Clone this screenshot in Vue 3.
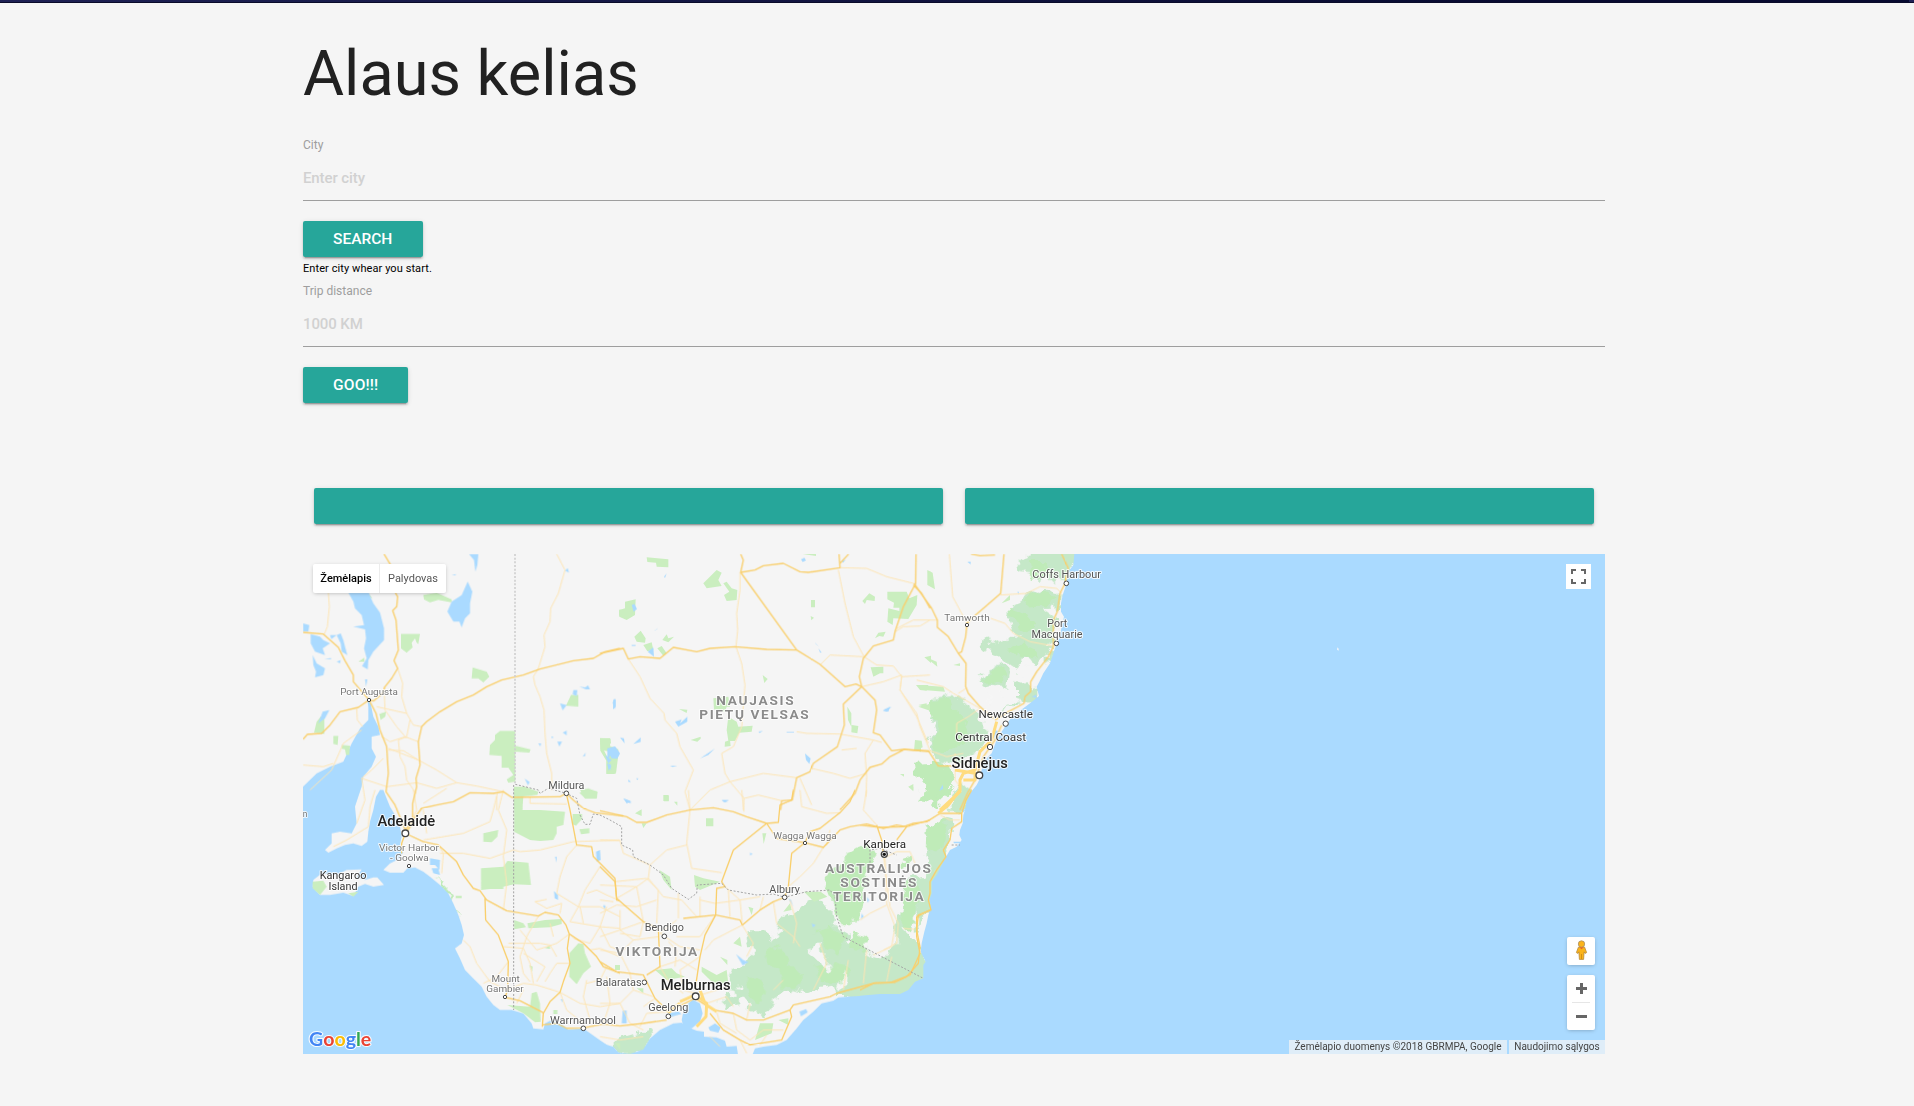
<script setup>
// Map geometry is split into six overlapping sheets; x / y is each sheet's origin.
const sheets = [
  {
    id: 'nw', x: 0, y: 0,
    parks: 'M400,165L440,158 485,178 485,187 445,180 420,187 402,178ZM333,282L390,282 385,312 380,308 375,295 365,308 368,322 350,338 333,325ZM548,382L590,395 598,410 580,427 565,415 545,415ZM92,530L103,530 103,582 72,578 80,545ZM268,522L288,515 286,530 272,540ZM130,588L145,588 143,615 130,612ZM155,615L180,617 178,645 168,645 165,628 155,626ZM630,573H676V725L655,728 650,718 670,705 655,683 635,683 635,648 598,645 600,615 615,600 615,585ZM676,617L722,628 718,638 676,635ZM672,740L705,740 745,755 742,765 700,770 697,810 672,810ZM870,750L895,745 922,755 920,775 885,775ZM843,465L865,465 865,500 828,497ZM930,595L962,597 960,618 985,628 985,645 978,700 950,700 950,660 960,635 932,630ZM987,210h8v18h-8ZM235,160L248,175 240,172ZM205,365l18,-12 0,12z',
    lakes: 'M175,158L236,158 250,190 270,218 282,265 282,300 250,335 235,360 233,388 216,378 230,355 222,325 228,295 225,268 190,260 222,255 215,225 195,205 190,185ZM533,125L547,155 540,190 540,220 525,235 515,262 508,245 490,245 472,215 485,185 515,165ZM537,42H565L562,75 556,95 552,60ZM39,250L58,255 55,275 39,275ZM62,282L90,290 100,300 120,310 98,325 105,345 75,335 62,310ZM140,285L152,280 160,300 165,320 172,345 155,335 152,310ZM68,345L80,370 105,385 100,405 75,412 78,395 70,375ZM225,418L232,418 228,440ZM98,515L118,510 105,535 85,550ZM825,92l8,-8 4,14zM810,490l20,5 -12,16zM850,450l12,0 -2,18 -12,-5zM868,440l18,2 8,-6 6,12 -12,0zM968,488l8,-12 0,32zM952,625L975,620 988,640 980,655 962,645 952,660ZM704,716l15,10 -5,10zM745,610l8,0 -2,10zM785,588l6,4 -6,3zM818,578l12,-6 0,14zM802,605l14,0 -8,15zM878,650l9,-12 -2,10zM952,672l10,0 0,20zM120,285l20,0 -16,12zM140,365l12,-5 -2,10zM103,356l20,-2 0,4zM485,106l12,-4 0,4z',
    major: 'M282,42L302,75M316,158L323,170 320,200 308,212 318,240 325,330 312,362 323,385 305,415 285,440 278,460 250,483 237,480M39,277L100,282 145,322 165,362 190,405 190,425 237,480M39,598L52,583 95,580 120,555 150,515 205,502 237,480M237,480L258,520 270,570 290,620 295,700 288,755 315,795 346,870M990,325L945,335 910,355 850,362 750,387 700,405 635,420 590,440 550,465 500,485 450,515 410,545 395,560 385,605 390,675 378,715 380,740 368,790 368,850 346,880M346,870L395,805 440,795 490,785 540,758 610,760 640,755 665,772 810,770 829,760 850,780 880,805 915,818 1000,828',
    minor: 'M800,42L825,90 805,160 782,205 780,245 762,285 765,320 745,385 730,410 735,435 750,470 762,510 765,580 770,640 785,700 785,750M115,158L118,200 112,260 103,282M323,385L338,430 335,470 350,520 370,555 395,560M260,500L350,520M282,440L285,510 320,560 350,595M275,590L300,605 345,590 385,605M295,625L385,660 440,690 500,728 560,738 640,755M39,675L100,680 130,670M215,715L290,740 380,728 440,745 500,728M215,715L245,690 280,655M200,505L202,540 218,560M60,750L125,690 160,610 215,570M360,540L350,590 325,600 330,650 345,680 350,720 378,760M295,630L340,632 385,660M400,790L470,745M620,770L620,810'
  },
  {
    id: 'n', x: 930, y: 0,
    parks: 'M140,52L205,58 205,82 170,80 168,68 142,66ZM310,130L350,90 365,98 355,120 365,138 320,145ZM370,130L380,125 395,145 412,150 410,180 380,183 372,165 388,155ZM75,185L107,178 105,225 80,240 58,230 58,210 75,205ZM103,290L122,272 137,295 135,308 110,305ZM130,315l25,-8 5,22 -18,5zM172,325L185,318 200,340 190,347ZM187,300L200,283 205,295 222,290 205,307ZM608,42H648V48ZM633,180h12v22h-12zM632,228l10,5 -8,8zM787,183L808,160 825,170 824,183 800,180 795,192ZM862,155L920,155 928,175 952,165 950,195 925,237 880,235 878,255 862,245 865,205 898,213 898,203 880,203 882,188 862,178ZM825,295L835,278 857,275 850,290 838,288ZM812,382L850,380 850,400 840,400 820,410ZM488,405l15,12 -10,12zM340,475L385,470 390,500 380,500 375,515 342,508ZM385,530L410,545 415,560 458,557 455,575 418,578 405,603 385,602 380,570ZM375,605l15,-5 2,18 -18,2zM237,507l25,2 -2,10zM272,600l30,-10 0,6 -10,9zM742,500l12,20 0,40 -10,-20zM755,555l20,3 -3,22 -18,-3zM973,352l20,-5 0,22zM948,435L985,435 980,452 960,450ZM945,600l20,2 3,20 -26,10zM0,595h30l3,14 -22,20 20,40 18,5 -5,28 -25,0 0,-40 -18,-30zM192,768h14v16h-14zM222,785l10,0 0,12zM983,95h10v45zM900,702l12,0 0,8zM925,740l15,-8 0,18zM955,500l35,-8 0,20z',
    lakes: 'M22,628L45,620 60,640 52,655 35,655ZM15,645l20,15 -10,10zM22,670l12,8 -8,14zM225,545L245,538 240,550 262,530 262,545 235,560ZM100,612l22,-20 0,14zM60,592l12,3 2,15zM300,655L345,625 325,645ZM615,640L632,655 628,672 618,660ZM143,335L160,322 162,350ZM603,58l10,-5 5,8 -10,5zM95,195l8,-3 8,15 -10,8zM40,478l7,0 0,22 -8,8zM655,325l10,12 -5,0zM645,308l12,12 -10,-8zM70,775L92,785 80,790ZM850,510L870,500 865,515ZM365,780l22,0 -12,6zM418,632l10,15zM475,575l14,-2 -10,6zM560,576h22v2h-22zM210,677l22,0 -14,4zM162,272l14,-8 -8,6zM192,110l8,-10 -5,14zM595,118l0,14zM85,718l8,8 -8,0zM108,715l8,0 -4,5zM95,315h12v3h-12zM725,62l12,-2 -8,8z',
    major: 'M0,340L70,325 85,357 120,350 180,355 220,322 290,335 330,325 405,320 500,328 590,330 660,373 735,440 768,432 785,440M422,42L430,60 422,97 590,330M422,97L465,90 490,77 550,70 600,95 625,97 720,83 717,42M720,70L746,42M948,42L947,130 910,200 885,275 880,300 820,318 790,355 778,410 785,440 825,480 830,510 820,578 840,585 875,632 910,628 990,635M940,135L965,160 990,205M785,440L730,492 733,555 712,620 640,670 630,695 590,713 577,780 545,782 542,810M910,630L870,650 845,672 810,682 780,720 765,760 720,810',
    minor: 'M85,357L120,410 150,475 192,520 195,540 230,580 240,620 280,690 255,755 270,810M420,97L420,150 410,220 413,270 408,320 425,370 435,435 425,560 400,620 365,640 375,700 390,725 432,775 430,810M270,810L330,750 390,725 490,700 590,713M432,775L475,765 545,782M720,83L800,85 860,110 940,130M715,90L735,190 760,290 792,350 830,375 880,378 905,410 990,405M785,440L850,425 905,405 900,450 950,530 985,610M885,275L910,260 960,258 990,240M590,575L620,580 720,582 820,600 845,607M820,600L795,640 800,710 798,770M635,685L700,700 750,715 800,700M600,715L635,795M662,373L690,345 790,350M725,630L770,625'
  },
  {
    id: 'ne', x: 1770, y: 0,
    sea: 'M583,42L580,75 565,95 560,130 548,165 543,190 543,215 552,230 545,260 540,285 530,310 520,340 510,370 490,400 478,425 470,440 477,468 450,490 430,505 400,525 385,545 365,575 350,600 335,640 315,660 305,690 300,715 290,735 270,760 258,790 257,830H2300V42Z',
    forest: 'M412,75L440,48 470,32H593L590,75 572,100 558,120 500,120 480,125 450,100 415,95ZM440,165L500,142 545,160 540,225 528,235 525,200 500,205 475,205 525,245 522,300 500,310 430,290 400,280 385,245 400,190ZM288,320L310,300 340,315 385,285 430,290 515,315 505,345 470,385 445,350 430,350 410,388 380,370 360,350 330,330 300,345ZM295,420L325,385 370,375 390,395 385,440 345,430 310,440ZM405,418L430,425 475,445 475,475 440,490 405,475ZM155,470L210,465 275,500 285,520 320,545 305,565 325,580 310,620 290,640 250,650 215,680 175,670 160,640 150,600 160,580 150,550 160,530 150,500ZM195,810L240,740 275,735 285,745 260,775 255,810ZM360,515L400,495 430,490 400,505ZM520,330l-5,25 -12,20 0,-20z',
    bright: 'M440,60L490,60 520,110 480,120 450,105ZM430,180L490,150 530,175 500,195 440,200ZM300,425L325,390 365,385 370,420 330,425ZM390,210L420,215 470,250 460,280 410,260ZM155,475L205,470 215,500 260,530 240,560 260,590 240,620 200,640 165,630 155,600 170,560 150,520ZM105,668L170,665 215,690 222,705 200,740 225,750 170,800 150,785 115,780 120,760 145,745 110,705ZM380,330L430,310 470,330 480,360 430,340Z',
    parks: 'M142,90L158,98 165,148 142,135ZM110,435L190,440 195,455 130,450ZM135,350l35,15 2,15zM105,600l18,15 0,20 -18,-5zM115,495l25,-5 0,12zM220,375l20,-5 0,8zM85,740l15,0 0,14zM365,190l25,-25 0,15z',
    clear: 'M318,440L400,480 395,500 335,520ZM440,380L480,395 450,440 420,420Z',
    lakes: 'M262,65h10v8zM325,265l8,15zM150,282l10,8zM8,512L35,500 20,515ZM288,125l12,25zM412,155h4v8zM178,752l10,-18 2,12zM340,565l15,10 -10,25zM455,470l14,-6 0,10z',
    major: 'M102,130L130,170 155,205 172,240 172,262 205,290 235,340 258,370 257,440 265,460 300,500 340,535M372,42L362,160 310,205 275,235 261,250 257,290 245,335 235,340M545,42L565,85 555,130 540,160 532,215 520,240 520,320 505,350 470,395 452,425 452,455 435,470 432,490 385,515 345,540M70,628L145,632 175,678 225,678M273,42L300,47 345,45M365,555L345,600 310,650 285,720 262,760 240,810',
    minor: 'M208,42L218,170 261,250M332,235L375,250 400,280 450,305 520,318M172,240L100,240 50,265M362,165L440,160 480,140 530,145 545,160M65,410L60,450 110,520 120,560 150,632M110,420L190,440 220,460 300,505M230,580L230,550 265,530 300,505M235,460L258,445M225,640L225,720 240,740M150,632L200,650 250,640',
    freeway: 'M350,545L335,600 300,635 285,690 250,700 240,720 240,755 180,810M225,690L285,700 285,720 250,720'
  },
  {
    id: 'sw', x: 0, y: 750,
    sea: 'M39,-10L80,-50 120,-70 160,-85 185,-140 210,-185 235,-210 235,-250 232,-270 242,-260 250,-220 265,-190 270,-165 245,-160 245,-125 258,-100 245,-70 220,-40 215,-10 205,20 195,50 200,100 185,130 150,125 125,130 125,160 105,180 115,188 140,175 165,165 190,160 215,168 232,155 235,125 240,95 250,60 258,20 270,0 280,0 290,25 300,50 315,75 330,110 335,140 330,165 340,185 330,205 300,220 280,240 300,248 340,248 352,235 375,232 400,245 420,260 450,285 475,310 490,340 505,375 515,405 522,435 515,460 495,475 510,505 525,540 550,565 575,590 590,620 610,645 630,660 665,660 700,670 725,700 730,715 760,718 765,700 785,690 810,700 835,718 880,715 915,740 950,765 990,790V900H30Z',
    land: 'M70,270L95,250 140,255 170,240 215,238 200,262 225,270 250,262 262,262 282,285 250,290 225,282 205,290 190,318 160,308 120,315 90,315 68,290Z',
    parks: 'M672,0H690L697,60H750L825,65 820,105 800,110 800,130 790,150 750,153 720,150 672,125ZM848,72h28l0,15 -18,20 -12,-5zM868,8L895,0 922,5 920,25 885,25ZM868,118l30,-3 0,15 -25,3zM580,130L625,120 622,140 605,157 580,155ZM573,235L640,230 652,213 715,218 723,285 672,283 640,290 640,297 600,297 573,300ZM672,390L700,400 708,412 672,418ZM712,400L765,390 815,387 815,402 780,412 715,415ZM838,490L865,460 880,462 885,490 903,530 880,550 860,583 838,560ZM497,317h18v8h-18zM765,475l15,-10 0,12zM652,645L720,650 725,610 740,605 750,640 752,695 735,697 700,670ZM68,275L100,272 110,290 90,315 68,295ZM175,310l30,-5 -15,15zM718,525l10,5 -2,15zM790,660h12v12h-12zM975,760h15v20z',
    bright: 'M425,255L470,300 500,350 510,395 500,370 480,330Z',
    lakes: 'M420,205L450,210 448,240 435,225 420,225ZM425,235h20l5,20 -20,-5zM918,185l12,-5 2,30 -12,5zM792,303l12,12 0,15 -10,-5zM795,200h5v18zM805,260l5,14zM940,348h5v12zM812,628h6v10zM440,130l10,15zM560,0l20,4z',
    major: 'M346,130L400,155 445,165 500,215 520,255 550,295 570,302 590,330 650,362 745,378 765,367 805,375 828,405 838,432 880,460 920,500 940,530 990,550M585,325L587,390 625,435 655,515 653,600 645,622M645,622L690,632 760,668 757,710M838,432L832,475 840,520 820,575 810,607 780,635 760,670M829,10L840,60 860,165 905,170 910,200 925,215 975,265 980,330 990,333M757,705L800,700 830,715 880,714 940,702 990,708M346,130L335,160 335,190',
    minor: 'M450,190L520,190 600,205 670,180 690,185 750,180 850,155 990,150M400,150L520,130 600,95 610,60 622,10M640,0L625,60 650,120 640,200 650,280 640,360M520,450L540,470 560,520 600,575 650,600 700,580 740,585 810,607M640,470L700,475 720,520 730,580M740,575L765,530 700,490M690,420L740,480 800,460 838,432M745,378L710,440 690,500 700,550 720,575M810,370L815,340 770,355 735,335 770,328M860,165L830,200 810,260 800,310 865,350 930,350 990,380M865,350L840,395 930,410 990,415M890,310L920,300 950,315 985,330M865,350L885,300 930,230M930,410L900,460 850,445M930,410L960,470 990,480M930,410L950,350M720,20V40L830,42M810,607L870,640 930,650 990,640M810,607L830,660 880,700M890,570L880,620 900,690M840,520L800,520 780,550 765,575M200,100L225,30 215,-35M255,0L240,50 235,110 170,150 130,170M370,0L380,60 350,120M400,60L410,130M445,165L460,190 455,250M655,515L620,560 580,580M655,460L750,460 780,465 800,500M680,640L700,600M950,530L930,570 890,580M900,480L930,475 990,500M780,400L790,440M870,350L880,400'
  },
  {
    id: 's', x: 930, y: 750,
    sea: 'M0,755L20,765 40,770 55,788 90,792 130,778 150,745 180,720 220,700 245,698 255,708 290,722 312,725 312,740 350,742 375,752 380,770 410,768 415,800 455,800 465,775 490,770 530,765 560,750 590,715 610,690 640,665 665,640 700,632 715,622 780,617V900H0ZM245,690L250,665 265,640 278,628 300,640 308,670 300,695 275,715 250,708ZM205,670L235,664 245,672 215,680ZM325,712L345,700 362,712 355,728 330,722Z',
    forest: 'M390,570L400,530 430,525 465,495 445,430 480,430 510,450 555,375 600,360 625,330 690,345 700,390 730,440 800,480 870,510 960,500 985,500 980,565 950,600 910,620 820,622 780,627 740,615 710,615 700,590 650,600 600,610 560,605 530,600 515,660 490,672 450,655 430,630 400,620ZM365,622L400,608 415,645 370,655ZM50,745L120,725 175,710 135,775 90,798 50,785Z',
    bright: 'M675,290L690,240 740,200 770,180 810,160 830,190 800,230 790,330 770,380 760,400 720,400 705,370 705,330ZM490,480L540,460 570,520 600,560 590,590 550,590 540,540 500,520ZM650,420L700,410 730,450 720,500 690,480ZM760,430L800,420 815,450 790,490 750,470ZM440,560L480,560 500,600 490,650 460,640ZM960,0L990,15 975,20ZM640,540L700,520 760,540 720,580 660,575Z',
    clear: 'M790,330L830,210 870,200 890,210 905,270 895,360 890,400 890,470 840,508 790,480 800,440 765,420 780,380ZM618,490L640,482 650,455 665,455 672,500 690,535 670,530 645,505ZM708,600L725,565 738,545 735,580 722,600ZM570,600l30,5 -25,8zM500,432L535,425 520,450ZM400,585l30,-10 -5,12z',
    parks: 'M165,540L215,535 230,550 255,560 200,570ZM305,530L350,555 380,540 385,580 340,580 305,545ZM465,750L480,700 520,700 515,730ZM178,240L210,260 215,300 190,270ZM282,255L310,265 360,275 300,300 285,290ZM318,85h22v24h-22zM400,460l20,-20 5,30zM445,350l15,5 -5,20zM535,690l30,-5 0,20zM110,595l20,0 0,15zM190,15h16v18h-16zM45,525h15v15h-15zM487,130l12,0 -8,32zM125,100l15,0 -10,14zM105,70l20,-12 0,20zM360,500l22,10 0,15zM612,305l50,0 20,15 -40,15zM550,365l20,-25 5,20z',
    lakes: 'M408,492l22,18 16,6 -18,10zM68,662h12v38h-15zM598,665l20,-8 5,10 -20,12zM565,325l8,5 6,20zM635,400l12,5 -8,8zM785,370l6,10 -8,8zM70,25l22,8 0,8zM185,160l15,-8zM450,188l8,4 -8,4zM220,155l12,-8zM365,30l20,4 -12,3zM285,35l8,6zM10,345h5v14zM205,190l5,12zM800,320l8,10 -6,8z',
    major: 'M0,62L80,80 110,97 140,97 200,75 270,60 340,53 400,65 440,80 500,100 535,97 540,45 575,30 580,0M765,0L750,35 720,68 660,115 630,125 615,158M500,100L530,145 615,158 670,172 720,120 750,110 800,102 850,115 890,105 920,110 990,90M830,105L845,150 850,190M920,110L890,150M500,100L400,180 365,275 375,290 350,295 347,375 315,435 300,500 285,600M250,385L347,375 420,390 427,405M615,158L575,190 565,290 554,322 520,335 480,360 427,405M0,230L45,275 50,325 130,395 175,415 180,530 140,555M0,515L50,545 130,555 140,575 165,625 205,665M60,708L130,700 200,690M205,665L285,625 340,660 400,670 440,690 490,690 570,660 580,645 690,620 710,610 820,580 870,578 930,555 960,490 950,440 950,380 990,360M330,670L370,720 420,750 450,765 545,750 575,680 570,660',
    minor: 'M265,0L270,60 260,160 275,235 365,248M425,0L432,65M0,150L60,152 70,190 150,225 145,265 110,290 0,285M150,225L200,180 260,165M145,265L190,320 245,330 290,380M45,275L140,265 175,300 170,400M50,325L110,290 130,395M0,370L50,345 110,350 170,330M180,430L230,390M180,430L240,470 300,480M427,405L340,450 315,480M427,405L420,330 375,290M300,330L345,340 420,330 480,320M235,310L235,385M300,320L300,380M385,300L390,380M347,375L300,440 230,440M427,405L460,460 440,500M480,360L490,320M520,335L530,400 580,440 600,470M570,330L590,400 580,460M670,172L640,220 600,260 565,290M600,0L605,50 680,70 720,68M800,0L790,60 830,105M680,165L690,120M850,190L860,270 870,350 895,400 890,460 850,480M0,440L60,420 130,395M0,480L60,490 100,450 175,440M60,490L90,550M180,530L240,510 290,540M180,530L210,580 250,610M90,550L100,600 60,640 0,640M100,600L160,620M60,640L90,700 130,720M20,560L30,640 10,700M130,650L165,625M240,540L250,600 285,610M285,620L350,600 390,590M320,640L380,620 400,650M400,670L410,720 450,750 490,720 550,720M440,690L450,640M350,665L360,700 410,730M330,740L360,770M420,750L440,790M480,765L500,735M240,540L300,500M190,600L240,590M205,665L140,670 120,710M0,740L60,750 130,740M520,600L550,570M640,600L680,520 660,460M730,600L745,510M800,480L790,580M205,455L230,480 225,530M60,360L60,420 100,450M0,330L40,335M130,395L120,440 60,430',
    freeway: 'M240,635L285,615 320,640 318,680 290,710M320,645L350,665M300,600L315,640M205,668L240,640'
  },
  {
    id: 'se', x: 1710, y: 750,
    sea: 'M340,0L325,25 318,50 310,75 308,100 300,120 298,135 305,150 290,170 270,180 258,200 245,225 230,255 215,275 215,310 208,330 213,350 205,375 200,400 193,425 185,460 182,485 197,515 190,525 190,565 165,575 145,600 120,612 60,612 0,617V900H2300V0Z',
    forest: 'M200,110L255,80 275,85 280,150 265,190 250,230 225,270 215,330 210,370 190,380 178,420 150,400 130,415 150,440 180,470 205,510 200,565 175,585 140,610 0,622V470L60,500 100,470 105,400 125,370 130,290 150,270 190,260 205,200 195,150ZM265,50L300,20 330,0 328,50 295,65Z',
    bright: 'M200,110L250,82 265,120 250,170 215,190 195,170ZM180,15L200,0 270,0 260,25 230,20 225,40ZM130,290L150,275 180,290 165,350 155,410 130,415 125,370ZM127,210l25,-10 0,20 -20,15zM0,420L30,430 20,470 0,480Z',
    clear: 'M155,380L172,365 170,450 125,415 160,415Z',
    lakes: 'M280,155h20v5h-18zM305,58l10,0 -4,10z',
    major: 'M0,105L60,112 130,110 160,100 200,95 240,70 305,70 305,95 275,115 270,150 250,180 258,200 230,240 210,275 210,310 205,330 213,360 175,375 170,420 180,470 175,520 140,560 105,577 45,578 0,600M335,0L318,30 305,70',
    minor: 'M80,200L110,185 150,185 165,220M75,200L80,340 105,410 95,470 40,495M0,390L30,370 80,345M95,500L80,575M130,415L165,418M240,75L270,90 300,90',
    freeway: 'M300,0L265,45 235,70'
  }
]

const layers = ['forest', 'bright', 'clear', 'sea', 'land', 'parks', 'lakes', 'minor', 'major', 'freeway']
const ragged = ['forest', 'bright', 'clear']

const borders = [
  'M671,735V1410',
  'M676,733L745,750 750,760 775,745 829,760 860,775 865,800 870,825 885,853 900,853 910,822 930,825 960,840 995,860 995,915 1028,930 1030,950 1080,975 1120,1005 1145,1045 1195,1078 1220,1060 1222,1035 1295,1030 1315,1050 1400,1065 1450,1062 1484,1072 1550,1055 1620,1050 1635,1070 1640,1130 1660,1190 1900,1315',
  'M1740,990V930L1770,925 1820,945M1985,915h25'
]

const labels = [
  { t: 'Port Augusta', x: 237, y: 466, w: 173, s: 29, c: '#757575' },
  { t: 'Mildura', x: 829, y: 747, w: 108, s: 31, c: '#555' },
  { t: 'NAUJASIS', x: 1395, y: 495, w: 232, s: 41, c: '#8b8b8b', b: 700 },
  { t: 'PIETŲ VELSAS', x: 1392, y: 537, w: 328, s: 41, c: '#8b8b8b', b: 700 },
  { t: 'Coffs Harbour', x: 2330, y: 113, w: 206, s: 32, c: '#555' },
  { t: 'Tamworth', x: 2031, y: 242, w: 136, s: 29, c: '#757575' },
  { t: 'Port', x: 2302, y: 260, w: 60, s: 32, c: '#555' },
  { t: 'Macquarie', x: 2301, y: 293, w: 153, s: 32, c: '#555' },
  { t: 'Newcastle', x: 2147, y: 534, w: 163, s: 35, c: '#333' },
  { t: 'Central Coast', x: 2102, y: 603, w: 213, s: 35, c: '#333' },
  { t: 'Sidnėjus', x: 2069, y: 685, w: 169, s: 43, c: '#222', b: 500 },
  { t: 'n', x: 45, y: 832, w: 14, s: 29, c: '#757575' },
  { t: 'Adelaidė', x: 349, y: 859, w: 173, s: 43, c: '#222', b: 500 },
  { t: 'Victor Harbor', x: 357, y: 934, w: 180, s: 29, c: '#757575' },
  { t: '- Goolwa', x: 358, y: 964, w: 116, s: 29, c: '#757575' },
  { t: 'Kangaroo', x: 159, y: 1016, w: 140, s: 32, c: '#333' },
  { t: 'Island', x: 159, y: 1049, w: 87, s: 32, c: '#333' },
  { t: 'Mount', x: 647, y: 1327, w: 85, s: 29, c: '#757575' },
  { t: 'Gambier', x: 645, y: 1357, w: 112, s: 29, c: '#757575' },
  { t: 'Warrnambool', x: 879, y: 1451, w: 198, s: 31, c: '#555' },
  { t: 'Balaratas', x: 986, y: 1337, w: 138, s: 31, c: '#555' },
  { t: 'VIKTORIJA', x: 1099, y: 1249, w: 245, s: 41, c: '#8b8b8b', b: 700 },
  { t: 'Bendigo', x: 1123, y: 1172, w: 118, s: 31, c: '#555' },
  { t: 'Melburnas', x: 1217, y: 1350, w: 210, s: 43, c: '#222', b: 500 },
  { t: 'Geelong', x: 1135, y: 1412, w: 120, s: 31, c: '#555' },
  { t: 'Wagga Wagga', x: 1545, y: 896, w: 190, s: 29, c: '#757575' },
  { t: 'Albury', x: 1484, y: 1058, w: 92, s: 31, c: '#555' },
  { t: 'Kanbera', x: 1784, y: 923, w: 128, s: 34, c: '#222' },
  { t: 'AUSTRALIJOS', x: 1764, y: 999, w: 318, s: 41, c: '#8b8b8b', b: 700 },
  { t: 'SOSTINĖS', x: 1765, y: 1041, w: 228, s: 41, c: '#8b8b8b', b: 700 },
  { t: 'TERITORIJA', x: 1765, y: 1083, w: 272, s: 41, c: '#8b8b8b', b: 700 }
]

const towns = [
  [237, 480, 5], [829, 760, 7], [2329, 130, 7], [2031, 255, 5], [2299, 310, 7],
  [2147, 551, 8], [2100, 621, 8], [2068, 706, 10], [346, 880, 10], [357, 978, 5],
  [645, 1371, 5], [880, 1465, 7], [1063, 1327, 7], [1123, 1189, 7], [1217, 1369, 10],
  [1135, 1429, 7], [1545, 909, 5], [1484, 1072, 7], [1783, 943, 9]
]
</script>

<template>
  <div class="top-bar"></div>
  <main class="container">
    <h1>Alaus kelias</h1>

    <form class="field" @submit.prevent>
      <label for="city">City</label>
      <input id="city" type="text" placeholder="Enter city" />
      <button class="btn search">Search</button>
    </form>
    <p class="hint">Enter city whear you start.</p>

    <form class="field" @submit.prevent>
      <label for="distance">Trip distance</label>
      <input id="distance" type="text" placeholder="1000 KM" />
      <button class="btn goo">Goo!!!</button>
    </form>

    <div class="row">
      <div class="btn wide"></div>
      <div class="btn wide"></div>
    </div>

    <section class="map">
      <svg class="canvas" viewBox="39 42 3906 1500" preserveAspectRatio="none">
        <defs>
          <filter id="ragged" filterUnits="userSpaceOnUse" x="0" y="0" width="3000" height="1600">
            <feTurbulence type="fractalNoise" baseFrequency="0.025" numOctaves="3" seed="4" />
            <feDisplacementMap in="SourceGraphic" scale="50" xChannelSelector="R" yChannelSelector="G" />
          </filter>
        </defs>
        <g v-for="layer in layers" :key="layer" :class="layer" :filter="ragged.includes(layer) ? 'url(#ragged)' : undefined">
          <template v-for="s in sheets" :key="s.id">
            <path v-if="s[layer]" :d="s[layer]" :transform="`translate(${s.x} ${s.y})`" />
          </template>
        </g>
        <path class="state" d="M675,42V735" />
        <path v-for="b in borders" :key="b" class="border" :d="b" />
        <path d="M3142,322l4,4 0,6 -5,-3z" fill="#f0f4f8" />
        <circle v-for="p in towns" :key="p.join()" class="town" :cx="p[0]" :cy="p[1]" :r="p[2]" :stroke-width="p[2] > 8 ? 4 : 3" />
        <circle cx="1783" cy="943" r="5" fill="#111" />
        <text
          v-for="l in labels" :key="l.t" class="label" :x="l.x" :y="l.y" :fill="l.c"
          :font-size="l.s" :font-weight="l.b || 400" :textLength="l.w"
          :lengthAdjust="l.s === 41 ? 'spacing' : 'spacingAndGlyphs'"
        >{{ l.t }}</text>
        <text class="logo" x="57" y="1518" textLength="187" lengthAdjust="spacingAndGlyphs"><tspan fill="#4285f4">G</tspan><tspan fill="#ea4335">o</tspan><tspan fill="#fbbc05">o</tspan><tspan fill="#4285f4">g</tspan><tspan fill="#34a853">l</tspan><tspan fill="#ea4335">e</tspan></text>
      </svg>

      <div class="types">
        <span class="active">Žemėlapis</span><span>Palydovas</span>
      </div>
      <div class="fullscreen">
        <svg width="15" height="15" viewBox="0 0 15 15"><path d="M0,0H5V2H2V5H0ZM10,0H15V5H13V2H10ZM0,10H2V13H5V15H0ZM13,10H15V15H10V13H13Z" fill="#666" /></svg>
      </div>
      <div class="tools">
        <div class="pegman">
          <svg width="13" height="21" viewBox="0 0 13 21">
            <path d="M3.4,7.2h6.2l2,5.4-1.6,.8-.9-1.6-.5,7.6H4.4L3.9,11.8 3,13.4 1.4,12.6Z" fill="#fbb41a" stroke="#b88a3c" stroke-width=".8" />
            <circle cx="6.5" cy="4" r="3.2" fill="#fbb41a" stroke="#a9916a" stroke-width=".8" />
            <path d="M4.2,7.3h4.6L6.5,9.3Z" fill="#e5672b" />
            <path d="M6.5,14v5" stroke="#c98712" stroke-width=".8" />
          </svg>
        </div>
        <div class="zoom">
          <span><svg width="11" height="11"><path d="M4,0h3v4h4v3H7v4H4V7H0V4h4z" fill="#666" /></svg></span>
          <i></i>
          <span><svg width="11" height="3"><path d="M0,0h11v3H0z" fill="#666" /></svg></span>
        </div>
      </div>
      <div class="credits">
        <span class="data">Žemėlapio duomenys ©2018 GBRMPA, Google</span>
        <span class="terms">Naudojimo sąlygos</span>
      </div>
    </section>
  </main>
</template>

<style>
body { background: #f5f5f5; }
</style>

<style scoped>
* { box-sizing: border-box; }
.top-bar {
  height: 3px;
  background: linear-gradient(90deg, transparent calc(100% - 5px), #1f2156 0), linear-gradient(90deg, #1e2154, #070a30 80%);
  box-shadow: inset 0 -1px #0a0b2a;
}
.container {
  width: 1302px;
  margin-left: 303px;
  font-family: Roboto, sans-serif;
  color: #000;
}
h1 {
  margin: 0;
  padding-top: 34px;
  height: 132px;
  font-size: 63px;
  line-height: 74px;
  font-weight: 400;
  color: #212121;
}
.field { display: flex; flex-direction: column; align-items: flex-start; }
label { height: 20px; line-height: 20px; font-size: 12px; color: #9e9e9e; }
input {
  width: 100%;
  height: 46px;
  margin: 0 0 20px;
  padding: 0;
  border: 0;
  border-bottom: 1px solid #9e9e9e;
  background: transparent;
  font: 500 15px Roboto, sans-serif;
  letter-spacing: -.1px;
  outline: 0;
}
input::placeholder { color: #d1d1d1; opacity: 1; }
.btn {
  height: 36px;
  padding: 0 0 0 30px;
  border: 0;
  border-radius: 2px;
  background: #26a69a;
  color: #fff;
  font: 500 15.5px/35px Roboto, sans-serif;
  text-align: left;
  text-transform: uppercase;
  box-shadow: 0 2px 2px 0 rgba(0, 0, 0, .14), 0 1px 5px 0 rgba(0, 0, 0, .12), 0 3px 1px -2px rgba(0, 0, 0, .2);
}
.search { width: 120px; }
.goo { width: 105px; letter-spacing: .2px; }
.hint { margin: 0; height: 24px; line-height: 24px; font-size: 11px; letter-spacing: .08px; }
.row { display: flex; gap: 22px; padding: 0 11px; margin-top: 85px; }
.wide { flex: 1; padding: 0; }
.map { position: relative; height: 500px; margin-top: 30px; overflow: hidden; }
.canvas { display: block; width: 1302px; height: 500px; }
.sea, .lakes { fill: #aadaff; }
.forest { fill: #c5e8c8; }
.bright { fill: #bfebb8; }
.parks { fill: #caeebf; }
.land, .clear { fill: #f5f5f5; }
.minor { fill: none; stroke: #fde5b4; stroke-width: 3; stroke-linejoin: round; }
.major { fill: none; stroke: #f9cf6c; stroke-width: 4; stroke-linejoin: round; }
.freeway { fill: none; stroke: #ffdc80; stroke-width: 9; stroke-linejoin: round; }
.state { fill: none; stroke: #d0d0d0; stroke-width: 5; stroke-dasharray: 6 5; }
.border { fill: none; stroke: #a3a3a3; stroke-width: 3; stroke-dasharray: 6 5; }
.town { fill: #fff; stroke: #444; }
.label {
  font-family: Roboto, sans-serif;
  text-anchor: middle;
  paint-order: stroke;
  stroke: rgba(255, 255, 255, .8);
  stroke-width: 6px;
  stroke-linejoin: round;
}
.logo {
  font: 700 54px Lato, sans-serif;
  paint-order: stroke;
  stroke: rgba(255, 255, 255, .9);
  stroke-width: 6px;
  stroke-linejoin: round;
}
.types {
  position: absolute;
  left: 10px;
  top: 10px;
  display: flex;
  height: 29px;
  border-radius: 2px;
  background: #fff;
  box-shadow: 0 1px 4px -1px rgba(0, 0, 0, .3);
  font-size: 11px;
  line-height: 29px;
  color: #565656;
  text-align: center;
}
.types span { width: 66px; }
.types .active { width: 67px; border-right: 1px solid #ececec; color: #000; font-weight: 500; }
.fullscreen {
  position: absolute;
  left: 1263px;
  top: 10px;
  width: 25px;
  height: 25px;
  display: grid;
  place-items: center;
  background: #fff;
}
.tools { position: absolute; left: 1264px; top: 383px; display: flex; flex-direction: column; gap: 10px; }
.pegman, .zoom { width: 28px; background: #fff; border-radius: 2px; box-shadow: 0 1px 4px -1px rgba(0, 0, 0, .3); }
.pegman { height: 28px; display: grid; place-items: center; }
.pegman svg { margin-top: -2px; }
.zoom { height: 55px; display: flex; flex-direction: column; align-items: center; }
.zoom span { flex: 1; display: grid; place-items: center; }
.zoom i { width: 18px; height: 1px; background: #e6e6e6; }
.credits {
  position: absolute;
  right: 0;
  bottom: 0;
  display: flex;
  gap: 2px;
  font-size: 10px;
  line-height: 13px;
  color: #444;
  white-space: nowrap;
  text-align: center;
}
.credits span { height: 14px; background: rgba(245, 245, 245, .7); }
.data { width: 218px; }
.terms { width: 96px; }
</style>
